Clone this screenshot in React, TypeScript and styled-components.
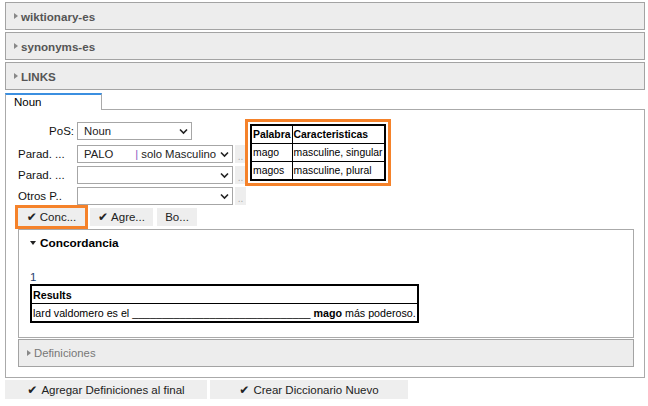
import React from 'react';
import styled, { createGlobalStyle } from 'styled-components';

const GlobalStyle = createGlobalStyle`
  html, body {
    margin: 0;
    padding: 0;
    background: #fff;
    font-family: "Liberation Sans", Arial, sans-serif;
    font-size: 11.3px;
    color: #000;
  }
`;

const Page = styled.div`
  width: 640px;
  padding: 2px 0 0 5px;
  display: flex;
  flex-direction: column;
`;

const AccordionStack = styled.div`
  display: flex;
  flex-direction: column;
  gap: 2px;
`;

const AccordionHeader = styled.div<{ $muted?: boolean }>`
  height: 26px;
  border: 1px solid #a3a3a3;
  background: #ededed;
  display: flex;
  align-items: center;
  padding-left: 8px;
  gap: 3px;
  font-size: ${(p) => (p.$muted ? '11.3px' : '11.6px')};
  font-weight: ${(p) => (p.$muted ? 'normal' : 'bold')};
  color: ${(p) => (p.$muted ? '#777' : '#555')};
`;

const Caret = styled.span<{ $open?: boolean }>`
  width: 0;
  height: 0;
  ${(p) =>
    p.$open
      ? `border-left: 3px solid transparent; border-right: 3px solid transparent; border-top: 4px solid #222;`
      : `border-top: 3px solid transparent; border-bottom: 3px solid transparent; border-left: 4px solid #888;`}
`;

const TabBar = styled.div`
  display: flex;
  margin-top: 3px;
`;

const Tab = styled.div`
  width: 87px;
  height: 15px;
  border-top: 2px solid #3b8fe0;
  border-left: 1px solid #aaa;
  border-right: 1px solid #aaa;
  padding-left: 8px;
  font-size: 11.5px;
  line-height: 15px;
`;

const TabFill = styled.div`
  flex: 1;
  border-bottom: 1px solid #aaa;
`;

const TabPanel = styled.div`
  height: 259px;
  border: 1px solid #aaa;
  border-top: none;
  padding: 8px 10px 0 12px;
  display: flex;
  flex-direction: column;
`;

const TopArea = styled.div`
  display: flex;
  align-items: flex-start;
`;

const FormColumn = styled.div`
  display: flex;
  flex-direction: column;
  gap: 3px;
  padding-top: 4px;
`;

const FormRow = styled.div<{ $extra?: number }>`
  display: flex;
  align-items: center;
  margin-bottom: ${(p) => p.$extra ?? 0}px;
`;

const Label = styled.span<{ $right?: boolean }>`
  width: 56px;
  text-align: ${(p) => (p.$right ? 'right' : 'left')};
  padding-right: 3px;
  font-size: 11.5px;
  color: #111;
  white-space: nowrap;
`;

const SelectBox = styled.div<{ $wide?: boolean }>`
  box-sizing: border-box;
  width: ${(p) => (p.$wide ? 156 : 115)}px;
  height: 18px;
  border: 1px solid #a6a6a6;
  display: flex;
  align-items: center;
  padding: 0 3px 0 6px;
  font-size: 11.3px;
  color: #222;
`;

const SelectValue = styled.span`
  flex: 1;
  min-width: 0;
  white-space: nowrap;
  overflow: hidden;
`;

const Pipe = styled.span`
  color: #8a5cc0;
  margin: 0 3px 0 22px;
`;

const DotsButton = styled.div`
  width: 11px;
  height: 18px;
  margin-left: 2px;
  background: #eeeeee;
  color: #aaa;
  font-size: 10px;
  display: flex;
  align-items: flex-end;
  justify-content: center;
  line-height: 12px;
`;

const WordTableBox = styled.div`
  margin-left: -1px;
  margin-top: 1px;
  border: 3px solid #f5822a;
  padding: 2px;
`;

const DataTable = styled.table<{ $width?: number; $size?: number }>`
  border-collapse: collapse;
  border: 2px solid #000;
  font-size: ${(p) => p.$size ?? 10.4}px;
  ${(p) => (p.$width ? `width: ${p.$width}px;` : '')}

  th, td {
    border: 1px solid #000;
    padding: 0 1px;
    height: 17px;
    text-align: left;
    white-space: nowrap;
  }

  th {
    font-weight: bold;
  }
`;

const ButtonRow = styled.div`
  display: flex;
  align-items: center;
  margin-left: -3px;
`;

const Highlight = styled.div`
  border: 3px solid #f5822a;
  margin-right: 2px;
`;

const SmallButton = styled.div<{ $w: number }>`
  width: ${(p) => p.$w}px;
  height: 18px;
  margin-right: 4px;
  background: #eeeeee;
  font-size: 11.5px;
  color: #222;
  display: flex;
  align-items: center;
  justify-content: center;
  gap: 3px;

  ${Highlight} & {
    margin-right: 0;
  }
`;

const Check = styled.span`
  font-family: "DejaVu Sans", sans-serif;
  font-size: 12px;
  color: #222;
`;

const ConcordanciaBox = styled.div`
  height: 107px;
  border: 1px solid #aaa;
  padding: 0 11px;
  display: flex;
  flex-direction: column;
`;

const SectionTitle = styled.div`
  height: 26px;
  display: flex;
  align-items: center;
  gap: 4px;
  font-weight: bold;
  font-size: 11.8px;
`;

const Count = styled.div`
  margin-top: 14px;
  color: #1f3f6e;
  font-size: 11.5px;
  line-height: 14px;
`;

const DefinicionesWrap = styled.div`
  margin-top: 1px;
`;

const FooterRow = styled.div`
  display: flex;
  gap: 3px;
  margin-top: 2px;
`;

const FooterButton = styled.div<{ $w: number }>`
  width: ${(p) => p.$w}px;
  height: 19px;
  background: #eeeeee;
  font-size: 11.5px;
  color: #222;
  display: flex;
  align-items: center;
  justify-content: center;
  gap: 4px;
`;

const Chevron: React.FC = () => (
  <svg width="9" height="7" viewBox="0 0 9 7">
    <path d="M1 1.5 L4.5 5 L8 1.5" stroke="#222" strokeWidth="1.6" fill="none" />
  </svg>
);

const App: React.FC = () => {
  return (
    <>
      <GlobalStyle />
      <Page>
        <AccordionStack>
          <AccordionHeader>
            <Caret />
            wiktionary-es
          </AccordionHeader>
          <AccordionHeader>
            <Caret />
            synonyms-es
          </AccordionHeader>
          <AccordionHeader>
            <Caret />
            LINKS
          </AccordionHeader>
        </AccordionStack>

        <TabBar>
          <Tab>Noun</Tab>
          <TabFill />
        </TabBar>

        <TabPanel>
          <TopArea>
            <FormColumn>
              <FormRow $extra={2}>
                <Label $right>PoS:</Label>
                <SelectBox>
                  <SelectValue>Noun</SelectValue>
                  <Chevron />
                </SelectBox>
              </FormRow>
              <FormRow>
                <Label>Parad. ...</Label>
                <SelectBox $wide>
                  <SelectValue>
                    PALO<Pipe>|</Pipe>solo Masculino
                  </SelectValue>
                  <Chevron />
                </SelectBox>
                <DotsButton>..</DotsButton>
              </FormRow>
              <FormRow>
                <Label>Parad. ...</Label>
                <SelectBox $wide>
                  <SelectValue />
                  <Chevron />
                </SelectBox>
                <DotsButton>..</DotsButton>
              </FormRow>
              <FormRow>
                <Label>Otros P..</Label>
                <SelectBox $wide>
                  <SelectValue />
                  <Chevron />
                </SelectBox>
                <DotsButton>..</DotsButton>
              </FormRow>
            </FormColumn>

            <WordTableBox>
              <DataTable>
                <tbody>
                  <tr>
                    <th>Palabra</th>
                    <th>Caracteristicas</th>
                  </tr>
                  <tr>
                    <td>mago</td>
                    <td>masculine, singular</td>
                  </tr>
                  <tr>
                    <td>magos</td>
                    <td>masculine, plural</td>
                  </tr>
                </tbody>
              </DataTable>
            </WordTableBox>
          </TopArea>

          <ButtonRow>
            <Highlight>
              <SmallButton $w={67}>
                <Check>✔</Check>Conc...
              </SmallButton>
            </Highlight>
            <SmallButton $w={63}>
              <Check>✔</Check>Agre...
            </SmallButton>
            <SmallButton $w={40}>Bo...</SmallButton>
          </ButtonRow>

          <ConcordanciaBox>
            <SectionTitle>
              <Caret $open />
              Concordancia
            </SectionTitle>
            <Count>1</Count>
            <DataTable $width={389} $size={10.7}>
              <tbody>
                <tr>
                  <th>Results</th>
                </tr>
                <tr>
                  <td>
                    lard valdomero es el ______________________________{' '}
                    <b>mago</b> más poderoso.
                  </td>
                </tr>
              </tbody>
            </DataTable>
          </ConcordanciaBox>

          <DefinicionesWrap>
            <AccordionHeader $muted>
              <Caret />
              Definiciones
            </AccordionHeader>
          </DefinicionesWrap>
        </TabPanel>

        <FooterRow>
          <FooterButton $w={202}>
            <Check>✔</Check>Agregar Definiciones al final
          </FooterButton>
          <FooterButton $w={198}>
            <Check>✔</Check>Crear Diccionario Nuevo
          </FooterButton>
        </FooterRow>
      </Page>
    </>
  );
};

export default App;
